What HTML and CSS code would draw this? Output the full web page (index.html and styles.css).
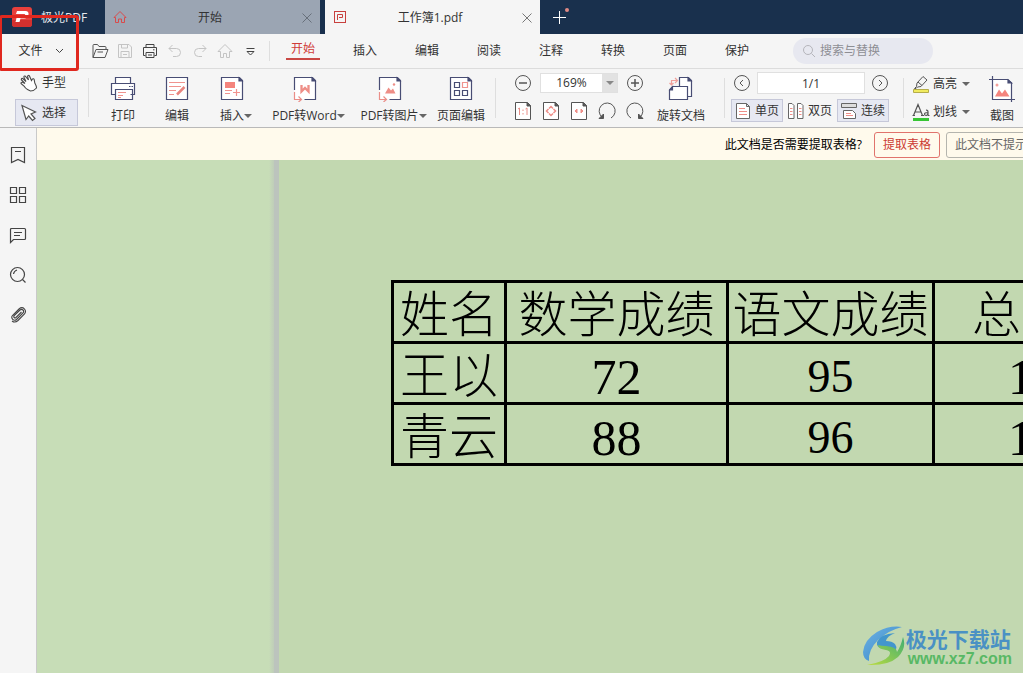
FILE: index.html
```html
<!DOCTYPE html>
<html lang="zh-CN">
<head>
<meta charset="utf-8">
<title>工作簿1.pdf - 极光PDF</title>
<link rel="stylesheet" href="styles.css">
</head>
<body>
<div class="app">
  <header class="titlebar">
    <div class="brand">
      <svg width="20" height="20" viewBox="0 0 20 20"><rect width="20" height="20" rx="3" fill="#e8403c"/><path d="M0 13h20v4a3 3 0 0 1-3 3H3a3 3 0 0 1-3-3z" fill="#d3302e"/><path d="M5 4h8.500q3.500 0 3 3.500-.7 4-4.500 4H8.500L7.500 15H3.500l1.500-6h7q1-.1 1.200-1 .1-1-.9-1H4z" fill="#fff"/></svg>
      <span>极光PDF</span>
    </div>
    <div class="tab">
      <svg width="14" height="14" viewBox="0 0 14 14" fill="none" stroke="#d94b4b"><path d="M1 7.500 7 1.500l6 6H11.500V12.500H8.500V9h-3v3.500h-3v-5z"/></svg>
      <span class="tab-name">开始</span>
      <button class="close" aria-label="关闭开始"><svg width="12" height="12" viewBox="0 0 12 12" stroke="#68707b"><path d="M1.500 1.500l9 9M10.500 1.500l-9 9"/></svg></button>
    </div>
    <div class="tab tab-current">
      <svg width="14" height="14" viewBox="0 0 14 14" fill="none" stroke="#c8403e"><rect x="1.500" y="1.500" width="11" height="11"/><path d="M4.500 10V4.500h5v3h-3.500"/></svg>
      <span class="tab-name">工作簿1.pdf</span>
      <button class="close" aria-label="关闭工作簿1.pdf"><svg width="12" height="12" viewBox="0 0 12 12" stroke="#777"><path d="M1.500 1.500l9 9M10.500 1.500l-9 9"/></svg></button>
    </div>
    <button class="new-tab" aria-label="新建标签"><svg width="20" height="20" viewBox="0 0 20 20"><path d="M3 10.500h13M9.500 4v13" stroke="#fff"/><circle cx="17" cy="3" r="2" fill="#e08a84"/></svg></button>
  </header>

  <nav class="menubar">
    <button class="file">文件<svg width="9" height="6" viewBox="0 0 9 6" fill="none" stroke="#444"><path d="M1 1l3.500 3.500L8 1"/></svg></button>
    <div class="quick">
      <button aria-label="打开"><svg width="18" height="18" viewBox="0 0 18 18" fill="none" stroke="#555"><path d="M2 15.500V3.500q0-1 1-1h3.500l1.500 2h6q1 0 1 1V7M2 15.500 5 7.500h12L14 15.500z"/><path d="M6.500 10H12"/></svg></button>
      <button aria-label="保存"><svg width="18" height="18" viewBox="0 0 18 18" fill="none" stroke="#c4c4c4"><path d="M2.500 2.500h10.500l2.500 2.500v10.500h-13zM5.500 2.500v3.500h6v-3.500M5 15.500V9.500h8v6M7 12.500h4"/></svg></button>
      <button aria-label="打印"><svg width="18" height="18" viewBox="0 0 18 18" fill="none" stroke="#444"><path d="M5 5.500v-3h8v3M4.500 13.500h-2v-8h13v8h-2M5 10.500h8v5H5zM12 7.800h1.500M7 13h4"/></svg></button>
      <button aria-label="撤销"><svg width="18" height="18" viewBox="0 0 18 18" fill="none" stroke="#c4c4c4"><path d="M6.500 3 3 6.500 6.500 10M3 6.500h7.500a4 4 0 0 1 0 8H7"/></svg></button>
      <button aria-label="重做"><svg width="18" height="18" viewBox="0 0 18 18" fill="none" stroke="#c4c4c4"><path d="M11.500 3 15 6.500 11.500 10M15 6.500H7.500a4 4 0 0 0 0 8H11"/></svg></button>
      <button aria-label="主页"><svg width="18" height="18" viewBox="0 0 18 18" fill="none" stroke="#c4c4c4"><path d="M2 9.500 9 2.500l7 7h-2.500v6h-3v-4h-3v4h-3v-6z"/></svg></button>
      <button aria-label="更多"><svg width="18" height="18" viewBox="0 0 18 18" fill="none" stroke="#444"><path d="M5.500 6.500h8M6 9.500l3.500 3.500L13 9.500z"/></svg></button>
    </div>
    <div class="menus">
      <button class="current">开始</button>
      <button>插入</button>
      <button>编辑</button>
      <button>阅读</button>
      <button>注释</button>
      <button>转换</button>
      <button>页面</button>
      <button>保护</button>
    </div>
    <label class="search">
      <svg width="14" height="14" viewBox="0 0 14 14" fill="none" stroke="#b5b5bb"><circle cx="6" cy="6" r="4.500"/><path d="M9.500 9.500l3.500 3.500"/></svg>
      <input type="text" placeholder="搜索与替换" aria-label="搜索与替换">
    </label>
  </nav>

  <div class="ribbon">
    <div class="group modes">
      <button><svg width="18" height="18" viewBox="0 0 18 18" fill="#fff" stroke="#4a4a4a" stroke-width="1.100"><path d="M7.500 15.500Q5.500 14.500 4 12L1 9.500q0-1.500 1.500-1.300L5 9.500 1.300 5.700q0-1.700 1.500-1.200L6 7.500 3.800 3q.3-1.600 1.700-.7L8.500 6 7.500 2.200q.9-1.400 1.900-.3L11.500 6.500 12.500 5q1.300-.6 1.700.6L14.800 9q2 3.500 1.700 5Q14 17 10.500 17z"/></svg>手型</button>
      <button class="on"><svg width="18" height="18" viewBox="0 0 18 18" fill="#fff" stroke="#555" stroke-width="1.200"><path d="M2 1.500 15.500 8l-4.500 2 4 4.500-2.500 2L8.700 12 6 15.500z"/></svg>选择</button>
    </div>
    <div class="group tools">
      <button><svg width="26" height="26" viewBox="0 0 26 26" fill="#fff" stroke="#484d74" stroke-width="1.200"><path d="M5.500 7.500v-6h15v6M5.500 18.500h-4v-11h23v11h-4M5.500 13.500h17v10h-17z"/><path d="M19 10.500h1.500M21.500 10.500H23"/><path d="M8 16.500h8M8 19.500h5M8 21.500h3" stroke="#f0938e"/></svg><span class="label">打印</span></button>
      <button><svg width="26" height="26" viewBox="0 0 26 26" fill="#fff" stroke="#484d74" stroke-width="1.200"><path d="M2.500 1.500h21v22h-21z"/><path d="M5 6.500h16M5 10.500h12M5 14.500h7M5 18.500h5" stroke="#f0938e"/><path d="M13 18.500 20.500 11" stroke="#e9857f" stroke-width="2.500"/></svg><span class="label">编辑</span></button>
      <button class="insert"><svg width="26" height="26" viewBox="0 0 26 26" fill="#fff" stroke="#484d74" stroke-width="1.200"><path d="M2.500 1.500h18l3 3v19h-21z"/><path d="M20 2v3h3z" fill="#484d74"/><path d="M6 6h10v6H6z" fill="#f4847d" stroke="none"/><path d="M6 14.500h7M6 17.500h5M14 16.500h7M17.500 13v7" stroke="#f0938e"/></svg><span class="label">插入<i class="caret"></i></span></button>
      <button class="to-word"><svg width="26" height="26" viewBox="0 0 26 26" fill="none" stroke="#484d74" stroke-width="1.200"><path d="M2.500 1.500h18l3 3v19h-21z" fill="#fff" stroke="none"/><path d="M2.500 14v-12.500h18l3 3v19h-11"/><path d="M20 2v3h3z" fill="#484d74"/><path d="M2.500 16v7.500h6M6.500 20.500l3 3-3 2.500" stroke="#ea8e88"/><path d="M9.500 9v6.500l3.500-3.500 3.500 3.500V9" stroke="#ee8e87" stroke-width="2.300"/></svg><span class="label">PDF转Word<i class="caret"></i></span></button>
      <button class="to-image"><svg width="26" height="26" viewBox="0 0 26 26" fill="none" stroke="#484d74" stroke-width="1.200"><path d="M2.500 1.500h18l3 3v19h-21z" fill="#fff" stroke="none"/><path d="M2.500 14v-12.500h18l3 3v19h-11"/><path d="M20 2v3h3z" fill="#484d74"/><path d="M2.500 16v7.500h6M6.500 20.500l3 3-3 2.500" stroke="#ea8e88"/><path d="M8 17.500l3.500-6 2.500 3 2-2 2.500 5z" fill="#ee8e87" stroke="none"/><circle cx="17" cy="8.500" r="1.200" fill="#ee8e87" stroke="none"/></svg><span class="label">PDF转图片<i class="caret"></i></span></button>
      <button class="page-edit"><svg width="26" height="26" viewBox="0 0 26 26" fill="#fff" stroke="#484d74" stroke-width="1.200"><path d="M2.500 1.500h18l3 3v19h-21z"/><path d="M20 2v3h3z" fill="#484d74"/><path d="M6.500 6.500h5v5h-5zM6.500 14.500h5v5h-5zM14.500 14.500h5v5h-5z"/><path d="M14.500 6.500h5v5h-5z" stroke="#f0938e"/></svg><span class="label">页面编辑</span></button>
    </div>
    <div class="group zoom">
      <div class="zoom-grid">
        <button aria-label="缩小"><svg width="18" height="18" viewBox="0 0 18 18" fill="none" stroke="#555"><circle cx="9" cy="9" r="7.500"/><path d="M5 9h8" stroke-width="1.500"/></svg></button>
        <div class="percent">
          <select aria-label="缩放比例"><option>169%</option><option>100%</option></select>
          <span class="drop"><i class="caret"></i></span>
        </div>
        <button aria-label="放大"><svg width="18" height="18" viewBox="0 0 18 18" fill="none" stroke="#555"><circle cx="9" cy="9" r="7.500"/><path d="M5 9h8M9 5v8" stroke-width="1.500"/></svg></button>
        <button aria-label="实际大小"><svg width="18" height="20" viewBox="0 0 18 20" fill="#fff" stroke="#555"><path d="M1.500 1.500h12l3 3v14h-15z"/><path d="M13 1.500v3.500h3.500z" fill="#555"/><path d="M4 8 5.500 7v7M11.500 8 13 7v7M9 8.500v1.500M9 12v1.500" fill="none" stroke="#ea8e88"/></svg></button>
        <button aria-label="适合页面"><svg width="18" height="20" viewBox="0 0 18 20" fill="#fff" stroke="#555"><path d="M1.500 1.500h12l3 3v14h-15z"/><path d="M13 1.500v3.500h3.500z" fill="#555"/><path d="M7 7.500 9 5.500l2 2M7 12.500l2 2 2-2M6.500 8l-2 2 2 2M11.500 8l2 2-2 2" fill="none" stroke="#ee8e88" stroke-width="1.500"/></svg></button>
        <button aria-label="适合宽度"><svg width="18" height="20" viewBox="0 0 18 20" fill="#fff" stroke="#555"><path d="M1.500 1.500h12l3 3v14h-15z"/><path d="M13 1.500v3.500h3.500z" fill="#555"/><path d="M7 8l-2 2 2 2zM11 8l2 2-2 2z" fill="#ee8e88" stroke="#ee8e88"/></svg></button>
        <button aria-label="向左旋转"><svg width="20" height="20" viewBox="0 0 20 20" fill="none" stroke="#555"><path d="M14 17A8 8 0 1 0 5.500 16.500"/><path d="M6.500 13v4.500H2z" fill="#555"/></svg></button>
        <button aria-label="向右旋转"><svg width="20" height="20" viewBox="0 0 20 20" fill="none" stroke="#555"><path d="M6 17A8 8 0 1 1 14.500 16.500"/><path d="M13.500 13v4.500H18z" fill="#555"/></svg></button>
      </div>
      <div class="tools">
        <button class="rotate"><svg width="26" height="26" viewBox="0 0 26 26" fill="#fff" stroke="#484d74" stroke-width="1.200"><path d="M11.500 10V1.500h9l3 3v16h-4"/><path d="M20 2v3h3z" fill="#484d74"/><path d="M1.500 14l3-3.500h15v13h-18z"/><path d="M4.500 11v3H2z" fill="#484d74"/><path d="M3.500 9V4.500H9M7 2l2.500 2.500L7 7M1.500 7l2 2 2-2" fill="none" stroke="#f0a09b"/></svg><span class="label">旋转文档</span></button>
      </div>
    </div>
    <div class="group paging">
      <div class="pager">
        <button aria-label="上一页"><svg width="18" height="18" viewBox="0 0 18 18" fill="none" stroke="#555"><circle cx="9" cy="9" r="7.500"/><path d="M10 6 7 9l3 3"/></svg></button>
        <input type="text" value="1/1" aria-label="页码">
        <button aria-label="下一页"><svg width="18" height="18" viewBox="0 0 18 18" fill="none" stroke="#555"><circle cx="9" cy="9" r="7.500"/><path d="M8 6l3 3-3 3"/></svg></button>
      </div>
      <div class="views">
        <button class="on"><svg width="16" height="18" viewBox="0 0 16 18" fill="#fff" stroke="#666"><path d="M1.500 1.500h10l3 3v12h-13zM11.500 1.500v3h3"/><path d="M4 6.500h6M4 9.500h8M4 12.500h8" stroke="#ee8e88"/></svg>单页</button>
        <button><svg width="16" height="18" viewBox="0 0 16 18" fill="#fff" stroke="#666"><path d="M.5 1.500h3.500l2 2v13H.5zM9.500 1.500H13l2 2v13H9.500z"/><path d="M2 6.500h2.500M2 9.500h2.500M2 12.500h2.500M11 6.500h2.500M11 9.500h2.500M11 12.500h2.500" stroke="#ee8e88"/></svg>双页</button>
        <button class="on"><svg width="16" height="18" viewBox="0 0 16 18" fill="#fff" stroke="#666"><path d="M.5 1.500h15v4H.5z" fill="#ddd"/><path d="M2.500 16.500v-8h9l3 3v5z"/><path d="M5 11.500h5M5 13.500h7" stroke="#ee8e88"/></svg>连续</button>
      </div>
    </div>
    <div class="group marks">
      <button><svg width="18" height="18" viewBox="0 0 18 18" fill="none" stroke="#555"><path d="M4.500 11.500 5 8 11 1.500l4 3.500-6 6.500-3.500.5-1.500 1.500H2.500zM6 7l4 3.500"/><path d="M1.500 14.500h15v3h-15z" fill="#f1eb5f" stroke="#b5ad4a"/></svg>高亮<i class="caret"></i></button>
      <button><svg width="18" height="18" viewBox="0 0 18 18" fill="none" stroke="#555" stroke-width="1.200"><path d="M1.500 12.500 6 1.500l4.500 11M3 9h6M.5 12.500H3M9 12.500h3M16 12.500V9q0-2-2-1.800M16 9.500q-3.500 0-3.500 1.500t1.700 1.500Q16 12.500 16 9.500M16 12.500h1.500"/><path d="M1 15h16v3H1z" fill="#37c534" stroke="none"/></svg>划线<i class="caret"></i></button>
    </div>
    <div class="tools">
      <button class="capture"><svg width="26" height="26" viewBox="0 0 26 26" fill="none" stroke="#484d74" stroke-width="1.200"><path d="M3.500 3.500h16l3 3v17h-19z" fill="#fff" stroke="none"/><path d="M3.500 0v23.500H26M0 3.500h19l3.500 3.500v19"/><path d="M19 4v3h3.500z" fill="#484d74"/><path d="M6 20.500l4-7 3 4 3-4 4.500 7z" fill="#f4847d" stroke="none"/><circle cx="8" cy="9" r="1.500" fill="#f4a19c" stroke="none"/></svg><span class="label">截图</span></button>
    </div>
  </div>

  <div class="body">
    <aside class="rail">
      <button aria-label="书签"><svg width="18" height="18" viewBox="0 0 18 18" fill="none" stroke="#444" stroke-width="1.200"><path d="M2.500 1.500h13v15L9 13.500l-6.500 3zM6 5.500h6"/></svg></button>
      <button aria-label="缩略图"><svg width="18" height="18" viewBox="0 0 18 18" fill="none" stroke="#444" stroke-width="1.200"><path d="M1.500 1.500h6v6h-6zM10.500 1.500h6v6h-6zM1.500 10.500h6v6h-6zM10.500 10.500h6v6h-6z"/></svg></button>
      <button aria-label="注释"><svg width="18" height="18" viewBox="0 0 18 18" fill="none" stroke="#444" stroke-width="1.200"><path d="M1.500 16.500v-13q0-1 1-1h13q1 0 1 1v9q0 1-1 1h-11zM5 6.500h8M5 9.500h6"/></svg></button>
      <button aria-label="搜索"><svg width="18" height="18" viewBox="0 0 18 18" fill="none" stroke="#444" stroke-width="1.200"><circle cx="8.500" cy="8.500" r="7"/><path d="M13.500 13.500l3 3M4.500 8q.5-3 3.500-4"/></svg></button>
      <button aria-label="附件"><svg width="18" height="18" viewBox="0 0 18 18" fill="none" stroke="#444" stroke-width="1.100"><path d="M12.500 6 7 11.500q-1 .8-1.800 0t0-1.800L11 4q1.700-1.300 3 0t0 3L7.500 13.500q-2 1.600-3.800-.2t-.2-3.800L10 3q3-2.500 5.300-.2T15.500 8L9 14.500q-3 2.800-6 .5"/></svg></button>
    </aside>
    <main class="main">
      <div class="notice">
        <span>此文档是否需要提取表格?</span>
        <button class="extract">提取表格</button>
        <button class="dismiss">此文档不提示</button>
      </div>
      <div class="canvas">
        <div class="margin"></div>
        <div class="page">
          <table>
            <colgroup><col class="c-name"><col class="c-math"><col class="c-lang"><col class="c-sum"></colgroup>
            <tr><th>姓名</th><th>数学成绩</th><th>语文成绩</th><th>总成绩</th></tr>
            <tr><td>王以</td><td class="num">72</td><td class="num small">95</td><td class="num">167</td></tr>
            <tr><td>青云</td><td class="num">88</td><td class="num small">96</td><td class="num">184</td></tr>
          </table>
        </div>
      </div>
    </main>
  </div>
  <div class="highlight-box"></div>
  <div class="watermark">
    <svg width="42" height="42" viewBox="0 0 42 42">
      <defs>
        <linearGradient id="sea" x1="0" y1="0" x2="1" y2="1"><stop offset="0" stop-color="#6fb2e2"/><stop offset="1" stop-color="#3487c9"/></linearGradient>
        <linearGradient id="leaf" x1="0" y1="1" x2="1" y2="0"><stop offset="0" stop-color="#bddc3f"/><stop offset="1" stop-color="#3fae72"/></linearGradient>
      </defs>
      <path d="M39 2Q27 0 14 7 1 15 0 27q0 7 6 9Q5 25 15 15 26 5 39 2z" fill="url(#sea)"/>
      <path d="M32 8Q17 9 14 17q-1 6 7 7 8 1 7 7 8-7 4-12-3-3-9-3 1-5 9-8z" fill="#4296cd"/>
      <path d="M40 12q4 11-5 20-10 9-31 8 17-3 22-9 3-5-3-6-8-1-8-5 3 1 8 1 11 1 11 6 4-6 6-15z" fill="url(#leaf)"/>
    </svg>
    <div class="mark-text"><span class="mark-name">极光下载站</span><span class="mark-url">www.xz7.com</span></div>
  </div>
</div>
</body>
</html>
```
FILE: styles.css
```css
* { box-sizing: border-box; }

body {
  margin: 0;
  font-family: "Open Sans", "Noto Sans CJK SC", sans-serif;
  font-size: 12px;
  line-height: 16px;
  color: #333;
  background: #f5f5f5;
}

button, input, select { font: inherit; color: inherit; }

button {
  display: flex;
  align-items: center;
  justify-content: center;
  padding: 0;
  border: 0;
  background: none;
  white-space: nowrap;
}

svg { display: block; flex: none; }

.app {
  position: relative;
  display: flex;
  flex-direction: column;
  height: 100vh;
  overflow: hidden;
}

.titlebar { display: flex; flex: none; height: 34px; background: #19304d; }

.brand {
  display: flex;
  align-items: center;
  gap: 9px;
  width: 105px;
  padding-left: 12px;
  color: #e6e9ee;
}

.brand span { padding-top: 2px; }

.tab {
  display: flex;
  align-items: center;
  width: 215px;
  margin-right: 5px;
  padding: 0 7px 0 8px;
  background: #9ba5b3;
}

.tab-current { margin-right: 0; background: #f5f5f5; }
.tab-name { flex: 1; padding: 2px 8px 0 0; text-align: center; }
.close { padding-top: 2px; }
.new-tab { width: 40px; }

.menubar {
  display: flex;
  flex: none;
  align-items: center;
  height: 35px;
  border-bottom: 1px solid #dcdcdc;
}

.file { gap: 12px; width: 78px; padding-left: 4px; height: 32px; }

.quick {
  display: flex;
  align-items: center;
  width: 192px;
  padding-left: 9px;
  border-right: 1px solid #dedede;
}

.quick button { width: 25px; height: 20px; }
.menus { display: flex; padding-left: 2px; }
.menus button { width: 62px; height: 34px; }

.menus .current {
  width: 34px;
  height: 20px;
  margin: 6px 14px;
  border-bottom: 2px solid #c94844;
  color: #d03b38;
}

.search {
  display: flex;
  align-items: center;
  gap: 4px;
  width: 140px;
  height: 26px;
  margin-left: 25px;
  padding: 0 9px;
  border-radius: 13px;
  background: #e7e8f0;
}

.search input { width: 100%; min-width: 0; padding: 0; border: 0; outline: 0; background: none; }
.search input::placeholder { color: #8e8e94; opacity: 1; }

.ribbon {
  display: flex;
  flex: none;
  height: 59px;
  border-bottom: 1px solid #b9b9b9;
}

.ribbon > * { flex: none; }

.group { position: relative; display: flex; }

.group::after {
  content: "";
  width: 1px;
  margin: 9px 0;
  margin-left: auto;
  background: #dedede;
}

.on { background: #e6e8f2; border: 1px solid #c6c8d9; }

.caret {
  flex: none;
  display: inline-block;
  border: 4px solid transparent;
  border-top-color: #666;
  border-bottom: 0;
}

.modes { display: grid; grid-template: 28px 27px / 63px 11px; align-content: start; row-gap: 2px; width: 89px; padding-left: 15px; }
.modes::after { grid-column: 2; grid-row: 1 / 3; }
.modes button { grid-column: 1; justify-content: flex-start; gap: 4px; padding-left: 5px; }
.modes .on { padding-left: 4px; }

.tools { display: flex; }
.group.tools { width: 407px; padding-left: 7px; }

.tools button {
  flex-direction: column;
  justify-content: flex-start;
  gap: 6px;
  width: 54px;
  padding-top: 7px;
}

.label { display: flex; align-items: center; }
.label .caret { margin-right: -8px; }
.tools .insert { width: 56px; }
.tools .to-word { width: 89px; }
.tools .to-image { width: 81px; }
.tools .page-edit { width: 62px; }

.zoom { width: 229px; padding-left: 13px; }
.zoom-grid { display: grid; grid-template: 28px 28px / repeat(5, 28px); }
.tools .rotate { width: 64px; }

.percent {
  grid-column: 2 / 5;
  position: relative;
  display: flex;
  align-self: center;
  height: 20px;
  margin: 0 3px;
  border: 1px solid #e0e0e0;
  background: #fff;
}

.percent select {
  width: 100%;
  padding: 0 15px 0 0;
  border: 0;
  background: none;
  appearance: none;
  text-align: center;
  text-align-last: center;
}

.drop {
  position: absolute;
  inset: 0 0 0 auto;
  display: flex;
  align-items: center;
  justify-content: center;
  width: 15px;
  background: #e2e2e2;
  pointer-events: none;
}

.drop .caret { border-top-color: #888; }

.paging { display: grid; grid-template: 28px 24px / 159px 14px; width: 179px; padding-left: 6px; }
.paging::after { grid-column: 2; grid-row: 1 / 4; height: 40px; }
.pager { grid-column: 1; display: flex; align-items: center; gap: 6px; padding: 0 1px 0 2px; }

.pager input {
  flex: 1;
  min-width: 0;
  height: 22px;
  border: 1px solid #e0e0e0;
  text-align: center;
}

.views { grid-column: 1; display: flex; gap: 1px; padding-top: 2px; }
.views button { width: 52px; height: 23px; gap: 4px; }

.marks { display: grid; grid-template: 28px 28px / auto; width: 73px; padding: 1px 0 0 8px; }
.marks::after { display: none; }
.marks button { gap: 3px; justify-content: flex-start; }
.marks .caret { margin-left: 2px; }
.tools .capture { width: 50px; }

.body { display: flex; flex: 1; min-height: 0; }

.rail {
  display: flex;
  flex: none;
  flex-direction: column;
  gap: 20px;
  width: 37px;
  padding: 17px 0;
  border-right: 1px solid #c9c9c9;
}

.rail button { height: 20px; }

.main { display: flex; flex: 1; flex-direction: column; min-width: 0; }

.notice {
  display: flex;
  flex: none;
  align-items: center;
  justify-content: flex-end;
  height: 32px;
  padding-top: 2px;
  background: #fffaec;
  color: #000;
  overflow: hidden;
}

.notice button { height: 26px; border: 1px solid #b5b5ae; border-radius: 3px; color: #666; }
.notice .extract { width: 66px; margin: 0 6px 0 12px; border-color: #e0736c; color: #cc3a33; }
.notice .dismiss { width: 90px; margin-right: -13px; }

.canvas { display: flex; flex: 1; min-height: 0; overflow: hidden; background: #c2d8b0; }

.margin {
  flex: none;
  width: 242px;
  border-right: 5px solid #bcc4bd;
  background: linear-gradient(to right, #c7ddb7 232px, #bfcdb9);
}

.page { flex: 1; min-width: 0; padding: 120px 0 0 112px; }

table {
  table-layout: fixed;
  width: 765px;
  border-collapse: collapse;
  color: #000;
  font: 300 49px/50px "Liberation Serif", "Noto Sans CJK SC", serif;
}

.c-name { width: 113px; }
.c-math { width: 222px; }
.c-lang { width: 206px; }
.c-sum { width: 224px; }

th, td {
  height: 61px;
  padding: 8px 0 0;
  border: 3px solid #000;
  font-weight: 300;
  text-align: center;
  white-space: nowrap;
}

.num { font-size: 50px; }
.small { font-size: 46px; }

.highlight-box {
  position: absolute;
  top: 15px;
  left: -1px;
  width: 80px;
  height: 56px;
  border: 3px solid #e0281f;
  border-radius: 3px;
  pointer-events: none;
}

.watermark {
  position: absolute;
  right: 11px;
  bottom: 6px;
  display: flex;
  align-items: center;
  gap: 1px;
}

.mark-text { display: flex; flex-direction: column; gap: 1px; }
.mark-name { font: 700 21px/24px "Noto Sans CJK SC", sans-serif; color: #4a91c4; }
.mark-url { padding-left: 2px; font: 700 16px/16px "Liberation Sans", sans-serif; color: #58b865; }
```
